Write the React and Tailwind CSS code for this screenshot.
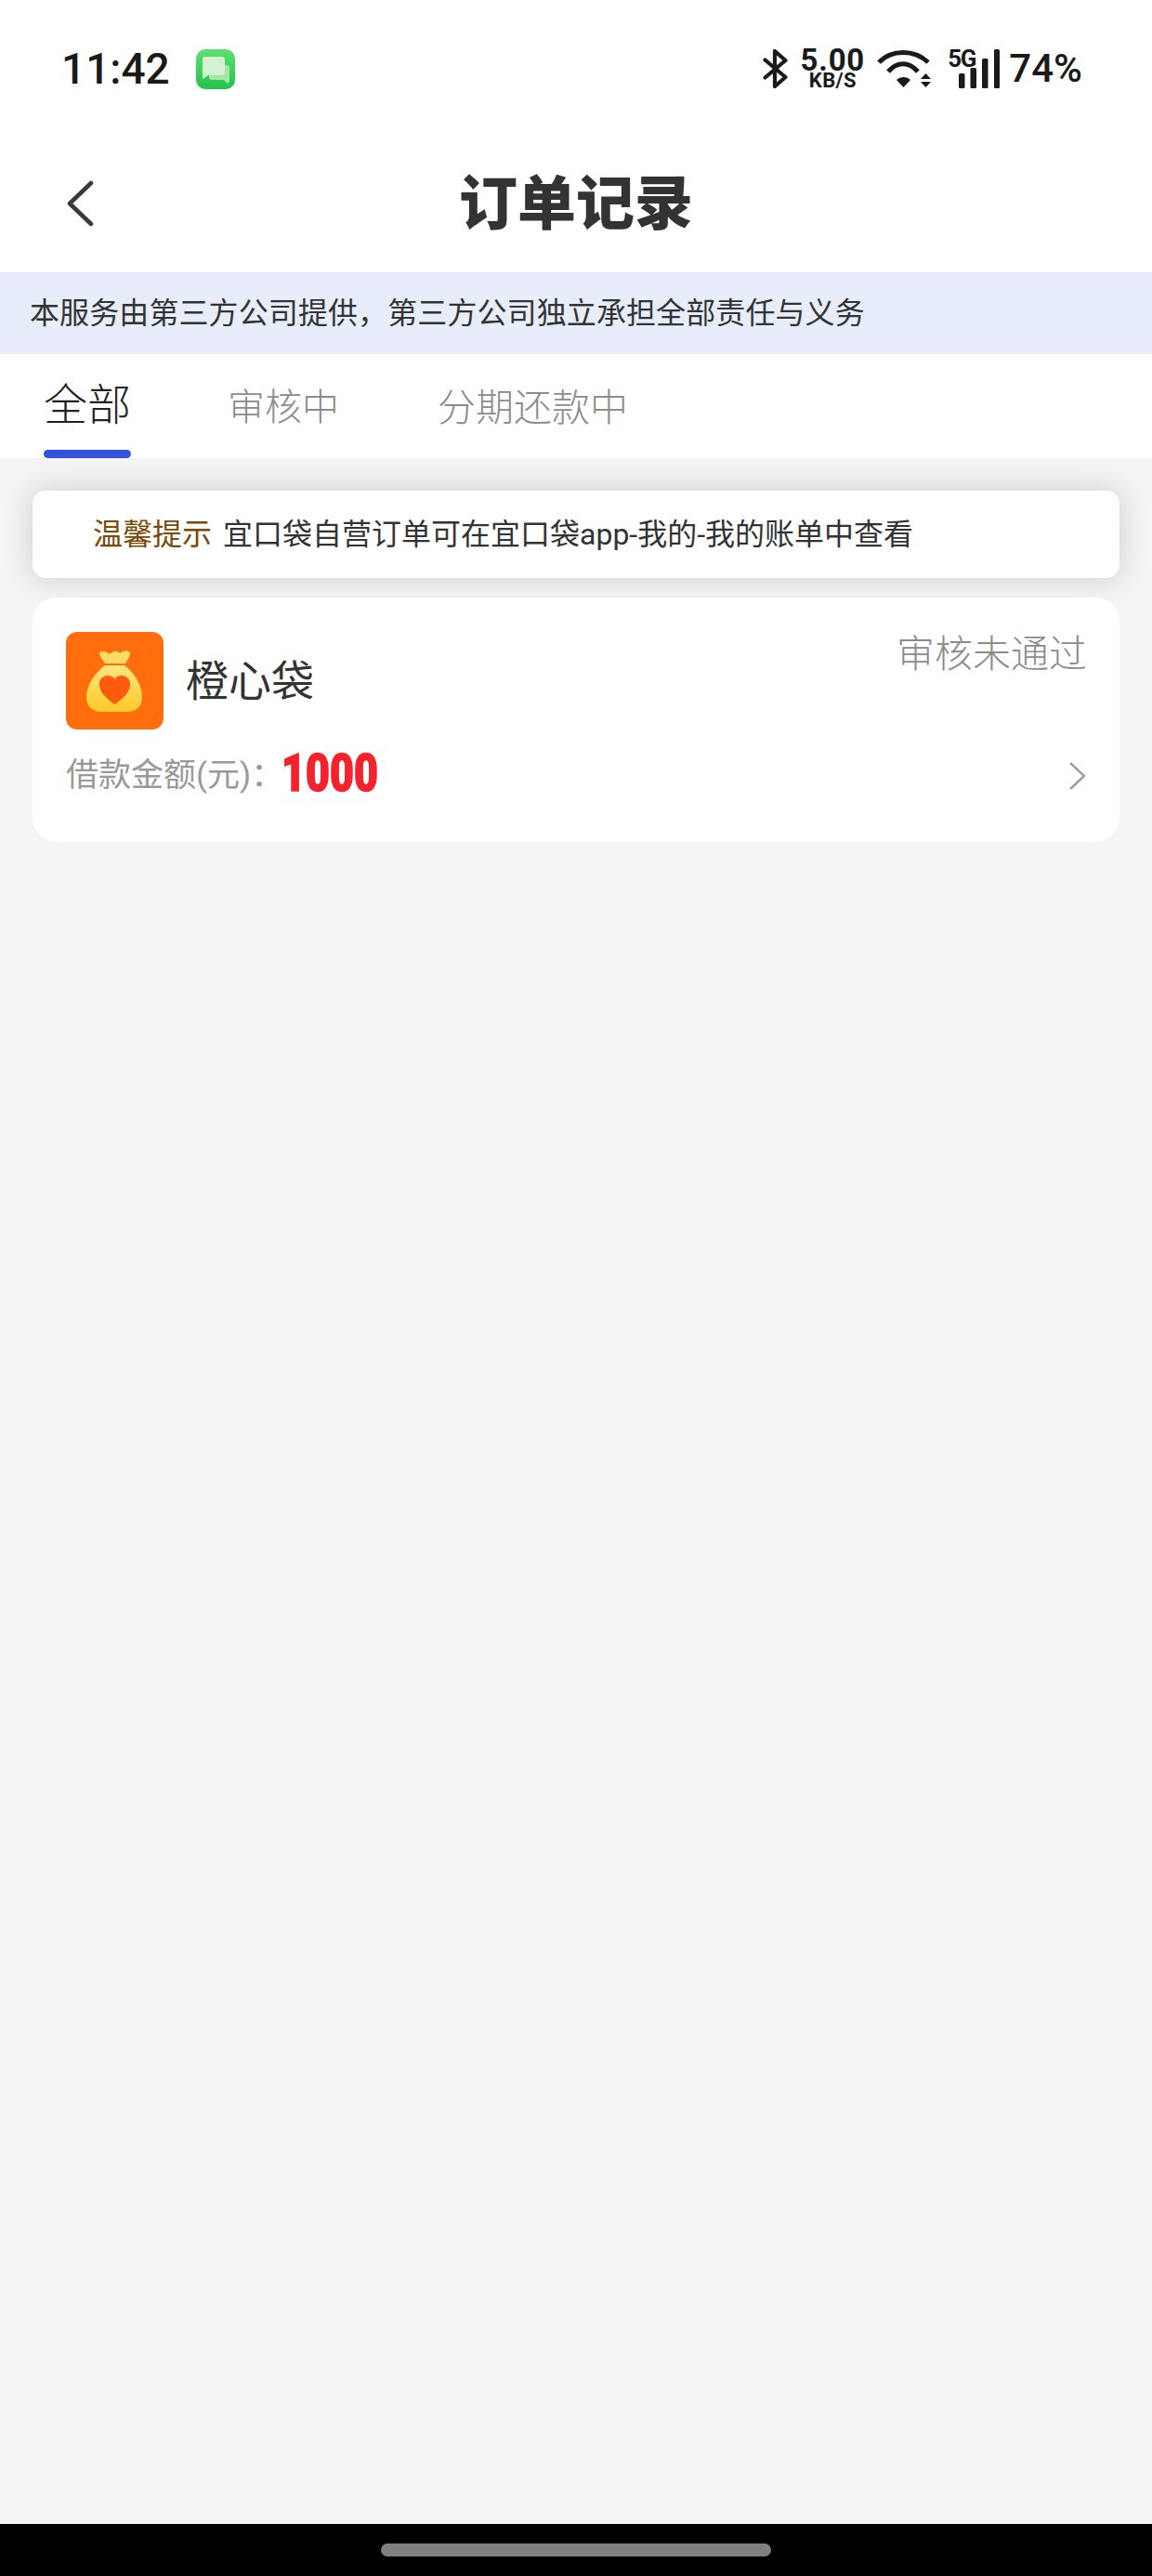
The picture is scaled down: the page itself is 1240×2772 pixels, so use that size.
import React from "react";

function AppIcon() {
  return (
    <svg width="43" height="43" viewBox="0 0 43 43" className="ml-[28px]">
      <defs>
        <linearGradient id="msg" x1="0" y1="0" x2="0" y2="1">
          <stop offset="0" stopColor="#5fe06f" />
          <stop offset="1" stopColor="#22c24e" />
        </linearGradient>
      </defs>
      <rect x="0" y="0" width="42" height="43" rx="10" fill="url(#msg)" />
      <path d="M14 17h19a3 3 0 0 1 3 3v15a2 2 0 0 1-3 1l-3-3H17a3 3 0 0 1-3-3z" fill="#a5e5a8" />
      <path d="M10 8h18a3 3 0 0 1 3 3v14a3 3 0 0 1-3 3H13l-4 3a1 1 0 0 1-2-1V11a3 3 0 0 1 3-3z" fill="#d2f2d2" />
    </svg>
  );
}

function StatusRight() {
  return (
    <div className="flex items-start text-[#1a1a1a]">
      <svg width="28" height="42" viewBox="0 0 28 42" fill="none" stroke="#1a1a1a" strokeWidth="4.200" strokeLinejoin="round" strokeLinecap="round">
        <path d="M2.500 11.500 24.500 30 13 40V2l11.500 10L2.500 30.500" />
      </svg>
      <div className="ml-[12px] flex w-[70px] flex-col items-center">
        <span className="h-[24px] text-[33px] font-bold leading-[24px] tracking-[0.8px]">5.00</span>
        <span className="mt-[2px] h-[16px] text-[22px] font-bold leading-[16px] tracking-[0.3px]">KB/S</span>
      </div>
      <svg width="59" height="42" viewBox="0 0 59 42" fill="none" className="ml-[13px]">
        <path d="M2 14C16 0 40 0 55 14" stroke="#1a1a1a" strokeWidth="5" />
        <path d="M12 24C22 13 34 13 44 24" stroke="#1a1a1a" strokeWidth="5" />
        <path d="M21 33C25 29 32 29 36 33L28.500 41Z" fill="#1a1a1a" />
        <path d="M47 32 52.500 26 58 32ZM47 35H58L52.500 41Z" fill="#1a1a1a" />
      </svg>
      <div className="relative ml-[17px] h-[43px] w-[56px]">
        <span className="absolute left-0 top-[-2px] text-[26px] font-bold leading-[24px] tracking-[-1.5px]">5G</span>
        <svg width="56" height="43" viewBox="0 0 56 43" fill="#1a1a1a">
          <rect x="12" y="26" width="6.500" height="16" rx="1.500" />
          <rect x="24.500" y="20" width="6.500" height="22" rx="1.500" />
          <rect x="37" y="10" width="6.500" height="32" rx="1.500" />
          <rect x="50" y="0" width="6" height="42" rx="1.500" />
        </svg>
      </div>
      <span className="ml-[10px] mt-[-1px] text-[42px] font-medium leading-[44px]">74%</span>
    </div>
  );
}

function BagLogo() {
  return (
    <svg width="105" height="105" viewBox="0 0 105 105" className="shrink-0">
      <defs>
        <linearGradient id="bag" x1="0" y1="0" x2="0" y2="1">
          <stop offset="0" stopColor="#ffe680" />
          <stop offset="1" stopColor="#ffc928" />
        </linearGradient>
      </defs>
      <rect width="105" height="105" rx="12" fill="#ff6d0c" />
      <path d="M36 22C40 20 44 21 47 24 49 21 55 19 58 23 61 20 66 19 69 22 70 26 66 30 64 34H42C40 30 36 27 36 22z" fill="#ffdc63" />
      <path d="M42 36H63C74 44 82 58 82 70 82 82 74 86 66 86H38C30 86 22 82 22 70 22 58 31 44 42 36z" fill="url(#bag)" />
      <path d="M52.500 78C42 70 36 65 36 56c0-6 5-9 9-9 3 0 6 1 7.500 4 1.500-3 4.500-4 7.500-4 4 0 9 3 9 9 0 9-6 14-16.500 22z" fill="#ff5a0e" />
    </svg>
  );
}

export default function App() {
  return (
    <div
      className="flex h-[2772px] w-full flex-col overflow-hidden bg-[#f4f4f4]"
      style={{ fontFamily: 'Roboto, "Noto Sans CJK SC", sans-serif' }}
    >
      <header className="bg-white">
        <div className="flex h-[148px] items-center justify-between pl-[66px] pr-[75px]">
          <div className="flex items-center">
            <span className="text-[46px] font-medium leading-none text-[#1a1a1a]">11:42</span>
            <AppIcon />
          </div>
          <StatusRight />
        </div>
        <div className="grid h-[145px] grid-cols-[1fr_auto_1fr] items-center pl-[72px]">
          <svg width="30" height="50" viewBox="0 0 30 50" fill="none" stroke="#3a3a3a" strokeWidth="4.500" strokeLinecap="round" strokeLinejoin="round" className="mt-[-4px]">
            <path d="M26 3 3 25l23 22" />
          </svg>
          <h1 className="ml-[-72px] mt-[-2px] text-[63px] font-black leading-none text-[#333]">订单记录</h1>
          <div />
        </div>
      </header>

      <div className="flex h-[88px] items-center bg-[#e8edfb] pl-[32px] text-[32px] tracking-[0.1px] text-[#333]">
        本服务由第三方公司提供，第三方公司独立承担全部责任与义务
      </div>

      <nav className="flex h-[112px] items-start bg-white pl-[47px]">
        <div className="flex h-full w-[94px] flex-col items-center justify-between">
          <span className="mt-[25px] text-[47px] font-light leading-[60px] text-[#222]">全部</span>
          <span className="h-[9px] w-full rounded-[5px] bg-[#3352df]" />
        </div>
        <span className="ml-[104px] mt-[31px] text-[40px] font-light leading-[54px] text-[#8c8c8c]">审核中</span>
        <span className="ml-[106px] mt-[31px] text-[41px] font-light leading-[54px] text-[#8c8c8c]">分期还款中</span>
      </nav>

      <main className="flex flex-1 flex-col gap-[21px] px-[35px] pt-[35px]">
        <div className="flex h-[94px] items-center rounded-[14px] bg-white pl-[65px] text-[32px] shadow-[0_0_32px_rgba(0,0,0,0.16)]">
          <span className="text-[#7b4a08]">温馨提示</span>
          <span className="ml-[12px] text-[#333]">宜口袋自营订单可在宜口袋app-我的-我的账单中查看</span>
        </div>

        <section className="h-[263px] rounded-[26px] bg-white pl-[36px] pr-[35px]">
          <div className="flex items-start justify-between pt-[37px]">
            <div className="flex items-center">
              <BagLogo />
              <span className="ml-[24px] text-[46px] leading-[60px] text-[#333]">橙心袋</span>
            </div>
            <span className="mt-[-3px] text-[41px] font-light leading-[54px] text-[#8c8c8c]">审核未通过</span>
          </div>
          <div className="mt-[23px] flex items-center justify-between">
            <div className="flex items-center">
              <span className="text-[35px] leading-[50px] text-[#999]">借款金额(元)：</span>
              <span className="ml-[-2px] mt-[-6px] origin-left scale-x-[0.8] text-[56px] font-black leading-[60px] text-[#f5222d] [-webkit-text-stroke:1.5px_#f5222d]">1000</span>
            </div>
            <svg width="20" height="32" viewBox="0 0 20 32" fill="none" stroke="#a0a0a0" strokeWidth="2.500">
              <path d="M2 2l15 14L2 30" />
            </svg>
          </div>
        </section>
      </main>

      <footer className="flex h-[56px] items-center justify-center bg-black">
        <span className="h-[14px] w-[420px] rounded-full bg-[#808080]" />
      </footer>
    </div>
  );
}
